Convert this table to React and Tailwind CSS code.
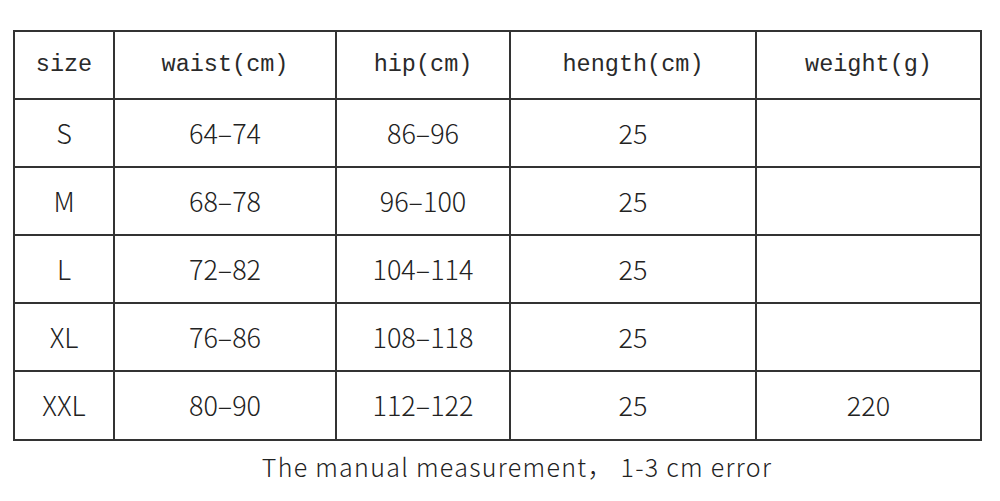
import React from "react";

const headers = ["size", "waist(cm)", "hip(cm)", "hength(cm)", "weight(g)"];
const rows = [
  ["S", "64–74", "86–96", "25", ""],
  ["M", "68–78", "96–100", "25", ""],
  ["L", "72–82", "104–114", "25", ""],
  ["XL", "76–86", "108–118", "25", ""],
  ["XXL", "80–90", "112–122", "25", "220"],
];
const widths = ["w-[100px]", "w-[222px]", "w-[174px]", "w-[246px]", "w-[225px]"];

export default function App() {
  return (
    <div className="w-[1000px] h-[501px] bg-white overflow-hidden">
      <div className="pt-[30px] pl-[13px]">
        <table className="border-collapse border-2 border-[#333] table-fixed w-[968px]">
          <colgroup>
            {widths.map((w, i) => (
              <col key={i} className={w} />
            ))}
          </colgroup>
          <tbody>
            <tr className="h-[68px]">
              {headers.map((h, i) => (
                <td
                  key={i}
                  className="border-2 border-[#333] text-center align-middle text-[23.5px] text-[#2a2a2a] pb-[1px]"
                  style={{ fontFamily: '"Liberation Mono", "DejaVu Sans Mono", monospace' }}
                >
                  {h}
                </td>
              ))}
            </tr>
            {rows.map((r, ri) => (
              <tr key={ri} className={ri === 4 ? "h-[69px]" : "h-[68px]"}>
                {r.map((c, ci) => (
                  <td
                    key={ci}
                    className="border-2 border-[#333] text-center align-middle text-[27px] text-[#222] font-light"
                    style={{ fontFamily: '"Noto Sans CJK SC", "Noto Sans", sans-serif' }}
                  >
                    {c}
                  </td>
                ))}
              </tr>
            ))}
          </tbody>
        </table>
        <div
          className="mt-[9px] pl-[40px] text-center text-[25px] tracking-[1.3px] text-[#222] font-light w-[968px] leading-[32px]"
          style={{ fontFamily: '"Noto Sans CJK SC", "Noto Sans", sans-serif' }}
        >
          The manual measurement， 1-3 cm error
        </div>
      </div>
    </div>
  );
}
